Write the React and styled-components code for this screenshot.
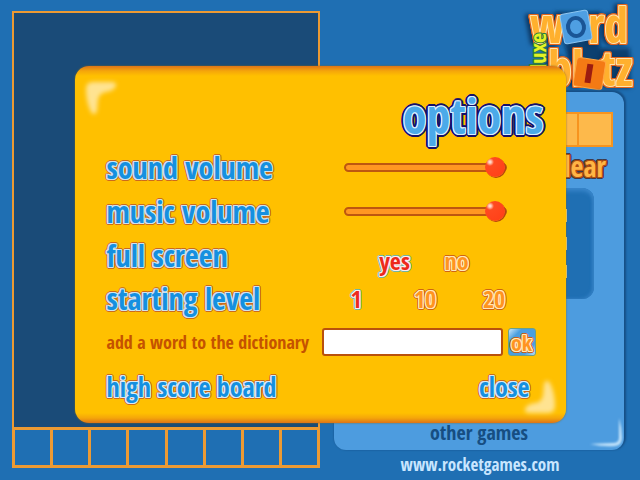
import React, { useState } from "react";
import styled, { createGlobalStyle, css } from "styled-components";

const display = '"Open Sans Condensed", "Liberation Sans Narrow", "Roboto Condensed", "Liberation Sans", sans-serif';

const GlobalStyle = createGlobalStyle`
  *, *::before, *::after { box-sizing: border-box; }
  body {
    margin: 0;
    background: #1f6fb3;
    font-family: ${display};
    font-weight: 700;
  }
  button, input { font: inherit; }
`;

const ring = (c, n) => {
  const parts = [];
  for (let x = -n; x <= n; x++) {
    for (let y = -n; y <= n; y++) {
      if ((x || y) && x * x + y * y <= n * n + 1) parts.push(`${x}px ${y}px 0 ${c}`);
    }
  }
  return parts.join(", ");
};

const outlined = (fill, inner, outer, n = 2) => css`
  color: ${fill};
  text-shadow: ${ring(inner, 1)}, ${ring(outer, n)};
`;

const Page = styled.main`
  position: relative;
  min-height: 100vh;
  display: grid;
  grid-template-columns: 308fr 306fr;
  gap: 14px;
  padding-left: 12px;
  overflow: hidden;
`;

const BoardColumn = styled.section`
  display: flex;
  flex-direction: column;
  padding: 11px 0 12px;
`;

const Board = styled.div`
  flex: 1;
  background: #1a4b78;
  border: 2px solid #ec9a33;
  border-bottom: 0;
`;

const Rack = styled.div`
  display: grid;
  grid-template-columns: repeat(8, 1fr);
  gap: 3px;
  padding: 3px;
  height: 41px;
  background: #ec9a33;
`;

const RackCell = styled.div`
  background: #1f6fb3;
`;

const SideColumn = styled.section`
  display: flex;
  flex-direction: column;
`;

const LogoBar = styled.header`
  display: flex;
  justify-content: flex-end;
  height: 92px;
  padding-right: 4px;
`;

const LogoArt = styled.svg`
  width: 112px;
  height: 92px;
  overflow: visible;
`;

const SidePanel = styled.div`
  position: relative;
  flex: 1;
  display: flex;
  flex-direction: column;
  align-items: flex-end;
  margin-right: 16px;
  padding: 20px 11px 5px;
  background: #4d9cdf;
  border-radius: 12px;
  box-shadow: 1px -1px 2px 1px #164f86;
`;

const NextLetters = styled.div`
  display: flex;
  gap: 2px;
  padding: 2px;
  background: #f7941e;
`;

const NextCell = styled.div`
  width: 32px;
  height: 31px;
  background: #fdb94b;
`;

const ClearButton = styled.button`
  margin: 3px 7px 0 0;
  padding: 0;
  border: 0;
  background: none;
  font-size: 28px;
  line-height: 32px;
  ${outlined("#ffb545", "#b04e10", "#3f3a4a", 2)}
`;

const Stats = styled.div`
  display: flex;
  flex-direction: column;
  align-items: flex-end;
  gap: 15px;
  width: 200px;
  height: 111px;
  margin: 6px 19px 0 0;
  padding: 21px 27px 0 0;
  border-radius: 12px;
  background: #1f6fb3;
  box-shadow: inset 0 3px 4px #3a87cb, inset -2px -1px 3px #2f7cc0;
`;

const StatValue = styled.div`
  width: 40px;
  height: 13px;
  background: #f5dc8a;
`;

const OtherGames = styled.a`
  align-self: center;
  margin-top: auto;
  font-size: 20px;
  line-height: 24px;
  color: #164e82;
  text-decoration: none;
`;

const PanelGlint = styled.svg`
  position: absolute;
  right: 0;
  bottom: 0;
  width: 44px;
  height: 40px;
`;

const SiteLink = styled.a`
  align-self: center;
  margin-right: 14px;
  font-size: 17px;
  line-height: 30px;
  color: #c9e6ff;
  text-decoration: none;
`;

const Overlay = styled.div`
  position: absolute;
  inset: 9px 0 0 0;
  display: grid;
  place-items: center;
`;

const Dialog = styled.form`
  position: relative;
  width: min(491px, 94vw);
  padding: 20px 22px 13px 32px;
  border-radius: 14px;
  background: linear-gradient(#dd7418 0, #f5a60a 5px, #ffc000 10px, #ffc000 calc(100% - 10px), #f5a60a calc(100% - 5px), #dd7418 100%);
  box-shadow: 0 0 2px #7d6a20;
`;

const Glint = styled.svg`
  position: absolute;
  width: 42px;
  height: 44px;
  ${(p) => (p.$end ? "right: 4px; bottom: 3px; transform: rotate(180deg);" : "left: 4px; top: 9px;")}
`;

const Title = styled.h1`
  margin: 0;
  text-align: right;
  font-size: 48px;
  line-height: 60px;
  ${outlined("#4baae9", "#d8f0ff", "#15106a", 3)}
`;

const Row = styled.div`
  display: flex;
  align-items: center;
  justify-content: space-between;
  height: ${(p) => p.$height || 44}px;
`;

const label = css`
  font-size: 30px;
  line-height: 36px;
  white-space: nowrap;
  ${outlined("#1590e0", "#cfe4ee", "#cc6a1c")}
`;

const RowLabel = styled.label`${label}`;
const GroupLabel = styled.span`${label}`;

const Controls = styled.div`
  display: flex;
  flex: none;
  width: 222px;
  padding-left: ${(p) => p.$indent || 0}px;
  ${(p) => p.$low && "padding-top: 10px;"}
`;

const Slider = styled.input`
  appearance: none;
  width: 163px;
  height: 20px;
  margin: 0 0 2px;
  background: none;
  &::-webkit-slider-runnable-track {
    height: 9px;
    border: 2px solid #bd5710;
    border-radius: 5px;
    background: #ff9722;
  }
  &::-webkit-slider-thumb {
    appearance: none;
    width: 20px;
    height: 20px;
    margin-top: -8px;
    border-radius: 50%;
    background: radial-gradient(circle at 5px 5px, #ffd9c8 0 1px, #ff4a20 4px, #ff3e16 100%);
    box-shadow: 1px 1px 0 #b8430c;
  }
`;

const Choice = styled.label`
  width: ${(p) => p.$width}px;
  text-align: center;
  font-size: 24px;
  line-height: 28px;
  cursor: pointer;
  ${outlined("#ff9420", "#ffe9b8", "#cf6414")}
  &:has(input:checked) {
    ${outlined("#ec2a1c", "#ffeef0", "#6fb6a4")}
  }
`;

const HiddenRadio = styled.input`
  position: absolute;
  opacity: 0;
  width: 1px;
  height: 1px;
  margin: 0;
`;

const WordLabel = styled.label`
  font-size: 18px;
  line-height: 24px;
  white-space: nowrap;
  color: #c55200;
`;

const WordEntry = styled.div`
  display: flex;
  flex: none;
  gap: 5px;
  width: 222px;
`;

const WordInput = styled.input`
  width: 181px;
  height: 28px;
  padding: 0 6px;
  border: 2px solid #b9510c;
  border-radius: 3px;
  background: #fff;
  color: #c55200;
  font-size: 18px;
`;

const OkButton = styled.button`
  width: 28px;
  height: 28px;
  padding: 0;
  border: 1px solid #6aa08c;
  border-radius: 3px;
  background: linear-gradient(135deg, #cbe8fb 0, #4a9fe0 25%, #4a9fe0 78%, #bfe2fa 100%);
  font-size: 22px;
  line-height: 24px;
  ${outlined("#ff9420", "#ffe9b8", "#c8601a")}
`;

const TextButton = styled.button`
  padding: 0;
  border: 0;
  background: none;
  font-size: 26px;
  line-height: 32px;
  cursor: pointer;
  ${(p) => p.$inset && "margin-right: 14px;"}
  ${outlined("#1590e0", "#d8ecf6", "#cc6a1c")}
`;

const LogoText = styled.text`
  font-family: ${display};
  font-weight: 700;
  font-size: ${(p) => p.$size}px;
  fill: ${(p) => p.$fill};
  stroke: ${(p) => p.$stroke};
  stroke-width: 2px;
  stroke-linejoin: round;
  paint-order: stroke fill;
`;

const LogoLetters = styled.g`
  filter: drop-shadow(1px 0 0 #e0641c) drop-shadow(-1px 0 0 #e0641c) drop-shadow(0 1px 0 #e0641c)
    drop-shadow(0 -1px 0 #e0641c) drop-shadow(-3px 0 2px #0b3560);
`;

function Logo() {
  const orange = { $fill: "#ffb02e", $stroke: "#ffe6b0" };
  return (
    <LogoArt viewBox="0 0 112 92" role="img" aria-label="word blitz deluxe">
      <defs>
        <filter id="soft" x="-20%" y="-20%" width="140%" height="140%">
          <feGaussianBlur stdDeviation="2" />
        </filter>
      </defs>
      <path d="M30 12h46v36h30v34H52z" fill="#0d3f70" filter="url(#soft)" />
      <LogoLetters>
        <LogoText $size={48} x="6" y="43" {...orange}>w</LogoText>
        <LogoText $size={48} x="64" y="43" {...orange}>rd</LogoText>
        <LogoText $size={48} x="24" y="86" {...orange}>bl</LogoText>
        <LogoText $size={48} x="76" y="86" {...orange}>tz</LogoText>
      </LogoLetters>
      <g transform="rotate(-10 52 27)">
        <rect x="38" y="12" width="28" height="30" rx="3" fill="#4f9fe2" stroke="#8cc6f2" />
        <ellipse cx="52" cy="27" rx="8" ry="9" fill="none" stroke="#1a5596" strokeWidth="4" />
      </g>
      <g transform="rotate(9 65 73)">
        <rect x="51" y="59" width="29" height="29" rx="3" fill="#f47a14" stroke="#ffa440" />
        <path d="M65 64v19" stroke="#9c1c10" strokeWidth="6" />
      </g>
      <g transform="translate(22 90) rotate(-90)">
        <LogoText $size={22} x="0" y="0" $fill="#e4f224" $stroke="#2d7b3c">deluxe</LogoText>
      </g>
    </LogoArt>
  );
}

function CornerGlint({ end }) {
  const id = end ? "glint-end" : "glint-start";
  return (
    <Glint $end={end} viewBox="0 0 42 44" aria-hidden="true">
      <defs>
        <filter id={id} x="-20%" y="-20%" width="140%" height="140%"><feGaussianBlur stdDeviation="2" /></filter>
      </defs>
      <path d="M7 14q0-7 7-7h18q6 0 5 4q-2 5-10 6q-7 1-8 8l-1 11q-2 6-6 1Q7 27 7 14z" fill="#ffe391" filter={`url(#${id})`} />
    </Glint>
  );
}

function VolumeRow({ id, text }) {
  const [value, setValue] = useState(100);
  return (
    <Row>
      <RowLabel htmlFor={id}>{text}</RowLabel>
      <Controls $indent={22}>
        <Slider id={id} type="range" min="0" max="100" value={value} onChange={(e) => setValue(+e.target.value)} />
      </Controls>
    </Row>
  );
}

function ChoiceRow({ name, text, options, width, indent, low, height }) {
  const [value, setValue] = useState(options[0]);
  return (
    <Row $height={height} role="radiogroup" aria-labelledby={name}>
      <GroupLabel id={name}>{text}</GroupLabel>
      <Controls $indent={indent} $low={low}>
        {options.map((o) => (
          <Choice key={o} $width={width}>
            <HiddenRadio type="radio" name={name} checked={value === o} onChange={() => setValue(o)} />
            {o}
          </Choice>
        ))}
      </Controls>
    </Row>
  );
}

export default function App() {
  return (
    <>
      <GlobalStyle />
      <Page>
        <BoardColumn>
          <Board />
          <Rack>
            {Array.from({ length: 8 }, (_, i) => <RackCell key={i} />)}
          </Rack>
        </BoardColumn>
        <SideColumn>
          <LogoBar><Logo /></LogoBar>
          <SidePanel>
            <NextLetters>
              <NextCell /><NextCell /><NextCell />
            </NextLetters>
            <ClearButton type="button">clear</ClearButton>
            <Stats>
              <StatValue /><StatValue /><StatValue />
            </Stats>
            <OtherGames href="#games">other games</OtherGames>
            <PanelGlint viewBox="0 0 44 40" aria-hidden="true">
              <defs><filter id="glint-panel"><feGaussianBlur stdDeviation="1" /></filter></defs>
              <path d="M39 8v20q0 5-6 5l-23 1q14 3 25 2q7-1 7-8q0-10-3-20z" fill="#c4e4fb" filter="url(#glint-panel)" />
            </PanelGlint>
          </SidePanel>
          <SiteLink href="#home">www.rocketgames.com</SiteLink>
        </SideColumn>
        <Overlay>
          <Dialog role="dialog" aria-labelledby="title" onSubmit={(e) => e.preventDefault()}>
            <CornerGlint />
            <CornerGlint end />
            <Title id="title">options</Title>
            <VolumeRow id="sound" text="sound volume" />
            <VolumeRow id="music" text="music volume" />
            <ChoiceRow name="screen" text="full screen" options={["yes", "no"]} width={62} indent={42} low />
            <ChoiceRow name="level" text="starting level" options={["1", "10", "20"]} width={69} height={42} />
            <Row>
              <WordLabel htmlFor="word">add a word to the dictionary</WordLabel>
              <WordEntry>
                <WordInput id="word" type="text" />
                <OkButton type="submit">ok</OkButton>
              </WordEntry>
            </Row>
            <Row $height={46}>
              <TextButton type="button">high score board</TextButton>
              <TextButton type="button" $inset>close</TextButton>
            </Row>
          </Dialog>
        </Overlay>
      </Page>
    </>
  );
}
